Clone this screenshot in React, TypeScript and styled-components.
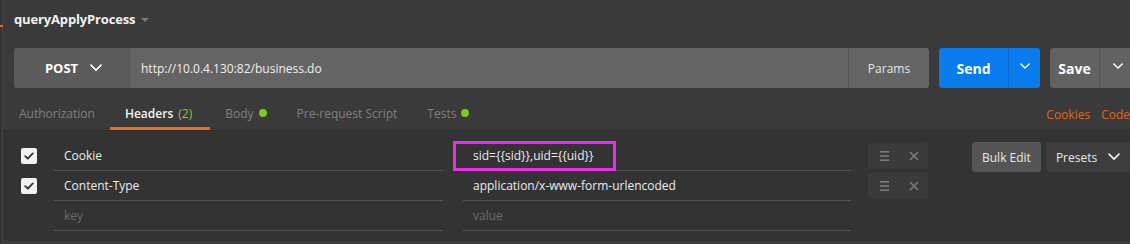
import React from "react";
import styled, { createGlobalStyle } from "styled-components";

const Global = createGlobalStyle`
  html, body {
    margin: 0;
    padding: 0;
    overflow: hidden;
    background: #3a3a3a;
    font-family: "Open Sans", "Noto Sans", sans-serif;
  }
`;

const ChevronDown = ({ size = 12, color = "#fff" }: { size?: number; color?: string }) => (
  <svg width={size} height={size * 0.6} viewBox="0 0 12 7" fill="none">
    <path d="M1 1l5 5 5-5" stroke={color} strokeWidth="1.8" strokeLinecap="round" strokeLinejoin="round" />
  </svg>
);

const tabs = [
  { label: "Authorization" },
  { label: "Headers", count: "(2)", active: true },
  { label: "Body", dot: true },
  { label: "Pre-request Script" },
  { label: "Tests", dot: true },
];

const headers = [
  { key: "Cookie", value: "sid={{sid}},uid={{uid}}", checked: true, marked: true },
  { key: "Content-Type", value: "application/x-www-form-urlencoded", checked: true },
  { key: "", value: "" },
];

export default function App() {
  return (
    <S.Page>
      <Global />
      <S.SideStrip>
        <span className="mark" />
      </S.SideStrip>
      <S.Main>
        <S.TitleRow>
          <span>queryApplyProcess</span>
          <S.Caret />
        </S.TitleRow>

        <S.RequestBar>
          <S.UrlGroup>
            <S.Method>
              POST
              <ChevronDown size={12} />
            </S.Method>
            <S.UrlInput>http://10.0.4.130:82/business.do</S.UrlInput>
            <S.Params>Params</S.Params>
          </S.UrlGroup>
          <S.SplitButton $bg="#097bed" $divider="#0b6dd0" $main={69} $drop={31}>
            <span className="main">Send</span>
            <span className="drop">
              <ChevronDown size={10} />
            </span>
          </S.SplitButton>
          <S.SplitButton $bg="#626262" $divider="#555555" $main={49} $drop={35}>
            <span className="main">Save</span>
            <span className="drop">
              <ChevronDown size={10} />
            </span>
          </S.SplitButton>
        </S.RequestBar>

        <S.TabBar>
          {tabs.map((t) => (
            <S.Tab key={t.label} $active={!!t.active}>
              {t.label}
              {t.count && <span className="count">{t.count}</span>}
              {t.dot && <span className="dot" />}
            </S.Tab>
          ))}
          <S.Links>
            <a>Cookies</a>
            <a>Code</a>
          </S.Links>
        </S.TabBar>

        <S.Panel>
          <S.Table>
            {headers.map((h, i) => (
              <S.Row key={i}>
                <S.CheckCell>
                  {h.checked && (
                    <S.Checkbox>
                      <svg width="10" height="8" viewBox="0 0 10 8" fill="none">
                        <path d="M1.2 4.2l2.6 2.4L8.8 1.4" stroke="#333" strokeWidth="1.8" strokeLinecap="round" strokeLinejoin="round" />
                      </svg>
                    </S.Checkbox>
                  )}
                </S.CheckCell>
                <S.Cell $w={389} $placeholder={!h.key}>
                  {h.key || "key"}
                </S.Cell>
                <S.Cell $w={388} $gap={20} $placeholder={!h.value}>
                  {h.value || "value"}
                  {h.marked && <S.Highlight />}
                </S.Cell>
                {h.checked && (
                  <S.Actions>
                    <svg width="9" height="10" viewBox="0 0 9 10">
                      <rect x="0" y="0" width="9" height="1.6" fill="#7a7a7a" />
                      <rect x="0" y="4.2" width="9" height="1.6" fill="#7a7a7a" />
                      <rect x="0" y="8.4" width="9" height="1.6" fill="#7a7a7a" />
                    </svg>
                    <svg width="10" height="10" viewBox="0 0 10 10">
                      <path d="M1 1l8 8M9 1L1 9" stroke="#7a7a7a" strokeWidth="1.6" />
                    </svg>
                  </S.Actions>
                )}
              </S.Row>
            ))}
          </S.Table>
          <S.SideButtons>
            <S.PanelButton $bg="#555555">Bulk Edit</S.PanelButton>
            <S.PanelButton $bg="#3d3d3d" $wide>
              Presets
              <ChevronDown size={12} color="#e6e6e6" />
            </S.PanelButton>
          </S.SideButtons>
        </S.Panel>
      </S.Main>
    </S.Page>
  );
}

const S = {
  Page: styled.div`
    display: flex;
    width: 1146px;
    height: 244px;
    background: #3a3a3a;
    color: #e8e8e8;
    font-size: 12px;
  `,
  SideStrip: styled.div`
    position: relative;
    width: 2px;
    flex-shrink: 0;
    background: #343434;
    border-right: 1px solid #444;
    .mark {
      position: absolute;
      left: 0;
      top: 25px;
      width: 3px;
      height: 2px;
      background: #f26b1d;
    }
  `,
  Main: styled.div`
    flex: 1;
    display: flex;
    flex-direction: column;
    min-width: 0;
  `,
  TitleRow: styled.div`
    display: flex;
    align-items: center;
    gap: 6px;
    height: 38px;
    padding-left: 11px;
    font-size: 13px;
    font-weight: 700;
    color: #f2f2f2;
    letter-spacing: -0.15px;
  `,
  Caret: styled.span`
    width: 0;
    height: 0;
    border-left: 4px solid transparent;
    border-right: 4px solid transparent;
    border-top: 4px solid #7a7a7a;
    margin-top: 1px;
  `,
  RequestBar: styled.div`
    display: flex;
    gap: 10px;
    height: 40px;
    margin-top: 10px;
    padding: 0 11px;
  `,
  UrlGroup: styled.div`
    flex: 1;
    display: flex;
    border-radius: 3px;
    overflow: hidden;
    background: #646464;
  `,
  Method: styled.div`
    width: 116px;
    display: flex;
    align-items: center;
    justify-content: center;
    gap: 12px;
    padding-left: 4px;
    box-sizing: border-box;
    background: #5b5b5b;
    border-right: 1px solid #555;
    font-size: 13px;
    font-weight: 700;
    color: #fff;
  `,
  UrlInput: styled.div`
    flex: 1;
    display: flex;
    align-items: center;
    padding-left: 11px;
    color: #f0f0f0;
  `,
  Params: styled.div`
    width: 80px;
    display: flex;
    align-items: center;
    justify-content: center;
    border-left: 1px solid #575757;
    color: #e6e6e6;
  `,
  SplitButton: styled.div<{ $bg: string; $divider: string; $main: number; $drop: number }>`
    display: flex;
    border-radius: 3px;
    overflow: hidden;
    background: ${(p) => p.$bg};
    color: #fff;
    font-size: 14px;
    font-weight: 700;
    .main {
      width: ${(p) => p.$main}px;
      display: flex;
      align-items: center;
      justify-content: center;
      border-right: 1px solid ${(p) => p.$divider};
    }
    .drop {
      width: ${(p) => p.$drop}px;
      display: flex;
      align-items: center;
      justify-content: center;
      padding-bottom: 4px;
      box-sizing: border-box;
    }
  `,
  TabBar: styled.div`
    display: flex;
    align-items: stretch;
    height: 41px;
    margin-top: 1px;
    padding-left: 1px;
    border-bottom: 1px solid #2e2e2e;
  `,
  Tab: styled.div<{ $active: boolean }>`
    display: flex;
    align-items: center;
    gap: 5px;
    padding: 10px ${(p) => (p.$active ? 18 : 15)}px 0 15px;
    border-bottom: 3px solid ${(p) => (p.$active ? "#f26b1d" : "transparent")};
    color: ${(p) => (p.$active ? "#f5f5f5" : "#808080")};
    font-weight: ${(p) => (p.$active ? 600 : 400)};
    .count {
      color: #8cc63f;
      font-weight: 400;
    }
    .dot {
      width: 8px;
      height: 8px;
      border-radius: 50%;
      background: #79cc1c;
    }
  `,
  Links: styled.div`
    margin-left: auto;
    display: flex;
    align-items: center;
    gap: 11px;
    padding: 10px 16px 0 0;
    color: #e0681c;
  `,
  Panel: styled.div`
    flex: 1;
    display: flex;
    background: #333333;
    padding-top: 10px;
    border-bottom: 1px solid #3d3d3d;
    margin-bottom: 2px;
  `,
  Table: styled.div`
    display: flex;
    flex-direction: column;
  `,
  Row: styled.div`
    display: flex;
    align-items: center;
    height: 30px;
  `,
  CheckCell: styled.div`
    width: 51px;
    height: 100%;
    display: flex;
    align-items: center;
    padding-left: 18px;
    box-sizing: border-box;
  `,
  Checkbox: styled.span`
    width: 16px;
    height: 16px;
    border-radius: 2px;
    background: #f2f2f2;
    display: flex;
    align-items: center;
    justify-content: center;
    margin-top: -1px;
  `,
  Cell: styled.div<{ $w: number; $gap?: number; $placeholder: boolean }>`
    position: relative;
    width: ${(p) => p.$w}px;
    height: 100%;
    margin-left: ${(p) => p.$gap ?? 0}px;
    box-sizing: border-box;
    display: flex;
    align-items: center;
    padding: 0 10px 1px;
    border-bottom: 1px solid #555;
    color: ${(p) => (p.$placeholder ? "#6a6a6a" : "#ececec")};
  `,
  Highlight: styled.span`
    position: absolute;
    left: -10px;
    top: 0px;
    width: 163px;
    height: 30px;
    box-sizing: border-box;
    border: 3px solid #ee2cee;
  `,
  Actions: styled.div`
    width: 60px;
    height: 26px;
    margin-left: 17px;
    border-radius: 3px;
    background: #3a3a3a;
    display: flex;
    align-items: center;
    gap: 20px;
    padding-left: 12px;
    box-sizing: border-box;
  `,
  SideButtons: styled.div`
    display: flex;
    gap: 5px;
    margin-left: 44px;
    align-items: flex-start;
    padding-top: 1px;
  `,
  PanelButton: styled.div<{ $bg: string; $wide?: boolean }>`
    height: 30px;
    display: flex;
    align-items: center;
    gap: 11px;
    padding: 0 ${(p) => (p.$wide ? 14 : 10)}px 0 10px;
    border-radius: 3px;
    background: ${(p) => p.$bg};
    color: #e8e8e8;
  `,
};
